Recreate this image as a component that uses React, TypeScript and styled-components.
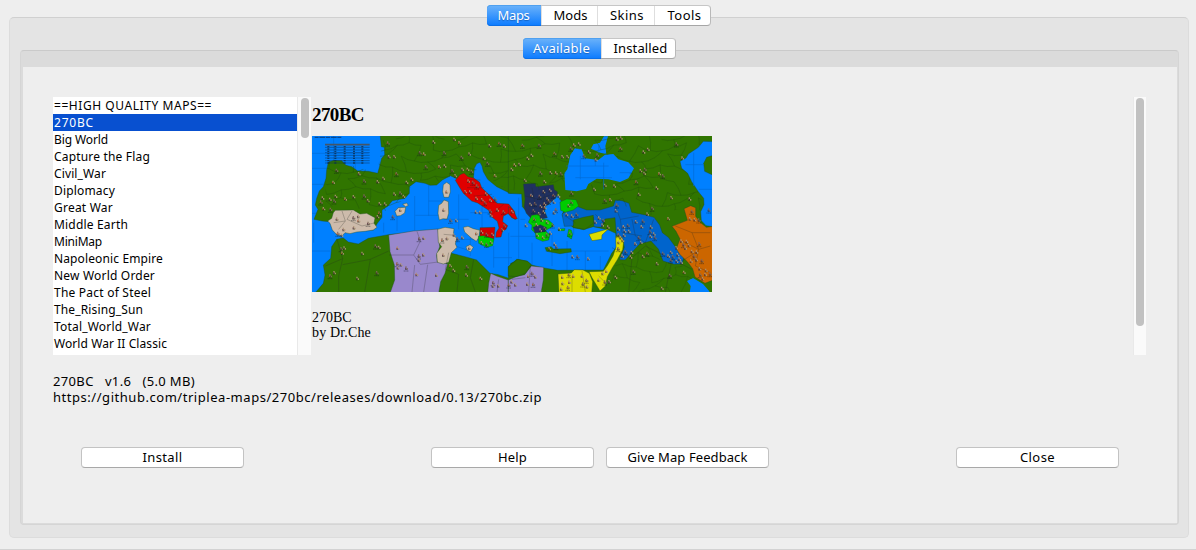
import React, { useLayoutEffect, useRef, useState } from 'react';
import styled, { createGlobalStyle, css } from 'styled-components';

const Global = createGlobalStyle`
  * { box-sizing: border-box; }
  html, body { margin: 0; background: #eeeeee; }
  body { overflow: hidden; }
`;

const Window = styled.main`
  width: 1196px;
  height: 550px;
  padding: 17px 7px 11px 9px;
  background: #eeeeee;
  border-bottom: 1px solid #d2d2d2;
  color: #000;
  font-family: 'Noto Sans', 'Open Sans', sans-serif;
  font-size: 13px;
`;

const OuterPane = styled.section`
  position: relative;
  height: 521px;
  padding: 32px 9px 12px 10px;
  border: 1px solid #dcdcdc;
  border-top-color: #d0d0d0;
  border-radius: 5px;
  background: #e4e4e4;
`;

const InnerPane = styled.section`
  position: relative;
  height: 475px;
  padding: 16px 1px 1px 2px;
  border: 1px solid #d5d5d5;
  border-top-color: #cacaca;
  border-radius: 4px;
  background: #dbdbdb;
`;

const Tabs = styled.nav<{ $left: number; $top: number }>`
  position: absolute;
  left: ${p => p.$left}px;
  top: ${p => p.$top}px;
  display: flex;
  height: 21px;
  border: 1px solid #b9b9b9;
  border-top-color: #c6c6c6;
  border-bottom-color: #a6a6a6;
  border-radius: 4px;
  background: #fff;
`;

const Tab = styled.button<{ $w: number; $active?: boolean; $indent?: number }>`
  width: ${p => p.$w}px;
  height: 19px;
  padding: 0 0 0 ${p => p.$indent ?? 2}px;
  border: 0;
  border-left: 1px solid #dedede;
  background: transparent;
  color: #000;
  font: inherit;
  line-height: 19px;
  text-align: center;
  &:first-child { border-left: 0; }
  ${p => p.$active && css`
    height: 21px;
    margin: -1px 0 -1px -1px;
    padding: 0 1px 0 0;
    border-radius: 4px 0 0 4px;
    background: linear-gradient(#6cb3fa, #0a7aff);
    box-shadow: inset 0 1px #4fa0ef, inset 0 -1px #0b6fe8;
    color: #fff;
    line-height: 21px;
    text-shadow: 0 1px 1px rgba(0, 50, 120, 0.45);
    & + * { border-left: 0; }
  `}
`;

const Content = styled.div`
  height: 456px;
  padding: 30px 31px 0 30px;
  background: #eeeeee;
`;

const Browser = styled.div`
  display: flex;
  height: 258px;
`;

const List = styled.ul`
  width: 244px;
  margin: 0;
  padding: 0;
  list-style: none;
  background: #fff;
  font-size: 12px;
`;

const Item = styled.li<{ $selected?: boolean }>`
  height: 17px;
  padding-left: 1px;
  line-height: 17px;
  background: ${p => (p.$selected ? '#0850d0' : 'transparent')};
  color: ${p => (p.$selected ? '#fff' : '#000')};
`;

const Track = styled.div<{ $w: number }>`
  width: ${p => p.$w}px;
  padding: 1px 2px 0 ${p => p.$w - 11}px;
  border-left: 1px solid #e9e9e9;
  background: #fafafa;
`;

const Thumb = styled.div<{ $h: number }>`
  width: 8px;
  height: ${p => p.$h}px;
  border-radius: 4px;
  background: #c1c1c1;
`;

const Description = styled.article`
  flex: 1;
  padding: 7px 0 0 1px;
  font-family: 'Liberation Serif', serif;
  font-size: 14px;
  line-height: 15px;
  overflow: hidden;
`;

const MapTitle = styled.h1`
  margin: 0 0 10px;
  font-size: 19px;
  line-height: 22px;
`;

const MapImage = styled.svg`
  display: block;
  width: 400px;
  height: 156px;
  margin-bottom: 18px;
`;

const Details = styled.div`
  padding-top: 18px;
  line-height: 16px;
`;

const Line = styled.div`
  height: 16px;
  white-space: pre;
`;

const Actions = styled.div`
  display: flex;
  justify-content: space-between;
  margin-top: 42px;
  padding: 0 27px 0 28px;
`;

const Pair = styled.div`
  display: flex;
  gap: 12px;
`;

const Button = styled.button`
  width: 163px;
  height: 21px;
  padding: 0;
  border: 1px solid #c3c3c3;
  border-bottom-color: #a8a8a8;
  border-radius: 4px;
  background: #fff;
  color: #000;
  font: inherit;
  line-height: 19px;
`;

const Actual = styled.span`
  display: inline-block;
  white-space: pre;
`;

/** Text tracked so that its glyph run fills the given width. */
function Tracked({ text, width }: { text: string; width: number }) {
  const ref = useRef<HTMLSpanElement>(null);
  const [spacing, setSpacing] = useState(0);
  useLayoutEffect(() => {
    const natural = ref.current!.getBoundingClientRect().width;
    setSpacing((width - natural) / text.length);
  }, [text, width]);
  return <Actual ref={ref} style={{ letterSpacing: spacing }}>{text}</Actual>;
}

const maps: [string, number][] = [
  ['==HIGH QUALITY MAPS==', 158], ['270BC', 40], ['Big World', 54], ['Capture the Flag', 96],
  ['Civil_War', 52], ['Diplomacy', 61], ['Great War', 59], ['Middle Earth', 74], ['MiniMap', 48],
  ['Napoleonic Empire', 109], ['New World Order', 101], ['The Pact of Steel', 97],
  ['The_Rising_Sun', 89], ['Total_World_War', 97], ['World War II Classic', 113],
];

const green = '#307500';
const beige = '#cdbbab';
const violet = '#9988cc';
const navy = '#203060';
const royal = '#0064cc';
const lime = '#00cc00';
const yellow = '#dddd00';

const west: [string, string][] = [
  [green, '210,10 214,50 223,52 224,75 215,85 210,105 203,130 175,124 143,123 125,110 108,106 95,92 72,91 55,97 50,120 48,145 40,170 28,183 20,205 16,225 24,238 12,268 36,273 58,275 100,300 190,300 202,280 216,262 216,240 234,228 247,212 285,205 298,190 298,170 318,155 345,160 360,166 380,165 397,150 421,137 440,146 490,145 493,115 500,101 510,97 516,108 520,125 533,148 560,170 600,190 620,188 620,10'],
  [green, '0,490 18,486 40,460 45,435 40,405 62,385 65,350 80,328 100,324 115,336 145,342 175,325 235,314 390,300 425,370 465,380 500,390 540,430 565,434 600,446 602,400 620,393 620,490'],
  [beige, '76,241 130,240 150,252 170,250 195,263 192,280 201,292 190,300 165,304 140,306 120,311 105,308 97,317 82,316 67,300 60,280 53,273 65,265 70,248'],
  [violet, '236,315 310,303 384,297 389,350 380,375 382,395 413,401 405,430 392,455 386,490 240,490 254,450 253,405 240,365'],
  [beige, '383,298 405,292 432,296 430,314 440,325 436,342 441,352 424,368 416,397 400,402 382,397 380,370 395,350 385,337'],
  [violet, '542,430 560,438 595,450 602,443 620,450 620,490 533,490 536,460'],
  [beige, '400,164 410,157 420,164 421,186 416,202 402,202 398,185'],
  [beige, '386,226 395,220 402,210 415,215 416,250 411,267 399,266 388,270 384,250'],
  [beige, '255,244 265,233 287,232 284,249 271,257 260,258'],
  [beige, '278,223 290,219 295,226 287,230'],
  ['#e00000', '436,151 450,134 462,129 474,140 491,144 509,157 515,173 538,195 561,220 596,222 614,245 616,268 605,263 596,250 580,258 578,275 593,287 587,299 578,302 573,321 557,322 559,307 567,294 562,274 543,259 536,241 503,219 485,213 460,190 448,171'],
  [beige, '460,292 474,289 490,296 510,301 506,323 499,334 485,325 464,306'],
  ['#d00000', '510,293 555,292 552,326 510,319'],
  [lime, '505,319 520,317 552,327 548,347 530,352 506,340'],
  [beige, '468,350 480,344 490,352 482,365 471,360'],
];

const east: [string, string][] = [
  [green, '-5,10 610,10 610,35 580,34 565,52 535,72 528,84 510,94 515,115 533,130 545,155 565,185 581,205 582,224 572,245 574,272 588,287 610,290 610,490 -5,490 -5,410 20,388 50,393 65,405 98,413 143,421 235,420 280,420 305,370 320,350 317,310 296,300 250,290 220,299 190,293 176,280 155,255 165,236 152,210 145,205 110,214 90,245 55,250 37,230 35,192 -5,190'],
  ['#0080ff', '195,55 215,58 225,85 265,90 285,74 310,72 325,88 355,97 372,115 355,145 330,156 295,148 260,146 235,162 228,177 200,184 166,180 163,130 172,118 181,75'],
  ['#0080ff', '243,56 250,43 270,38 282,19 294,19 286,48 289,72 271,68'],
  ['#0080ff', '128,198 150,197 145,218 157,242 154,271 130,269 112,257'],
  [navy, '40,162 76,160 78,170 130,164 133,179 143,186 139,202 117,222 105,230 104,244 112,263 90,268 62,264 49,250 42,231 45,207'],
  [royal, '156,252 178,236 198,228 230,240 270,240 310,228 316,210 336,212 357,220 365,247 402,254 432,262 449,285 457,308 475,322 496,350 521,380 517,402 492,403 459,393 445,357 423,333 389,342 366,367 346,390 328,389 343,352 338,324 319,316 315,263 285,267 276,292 252,290 250,262 209,269 188,288 163,289'],
  [green, '190,270 220,262 250,256 250,280 225,298 190,292'],
  [lime, '150,216 170,207 198,209 206,228 190,240 166,247 152,241'],
  [lime, '65,256 88,253 91,267 115,270 130,283 127,290 105,302 120,314 116,330 98,334 78,325 76,309 65,299 66,286 55,277'],
  [navy, '69,292 91,284 110,293 105,305 75,309'],
  [lime, '176,298 184,301 188,314 184,327 172,319'],
  [lime, '144,297 165,296 163,302 145,302'],
  [green, '105,353 123,350 131,357 183,356 184,366 150,371 110,364'],
  [yellow, '237,313 262,306 296,296 276,315 275,328 246,332'],
  [yellow, '317,320 332,319 341,334 338,359 322,389 307,413 292,440 286,468 270,483 246,443 237,425 280,424 292,407 309,378 318,351'],
  [yellow, '144,432 184,429 193,419 219,420 238,430 248,455 245,490 147,490'],
  [violet, '-5,450 18,440 44,434 64,408 101,412 100,450 93,490 -5,490'],
  [green, '-5,410 23,388 53,394 64,404 46,430 18,440 -5,438'],
  ['#cc6600', '486,289 532,271 522,236 542,227 557,233 557,259 572,278 589,292 610,289 610,450 585,460 555,441 548,416 532,395 509,373 499,356 510,327 498,304'],
  ['#0080ff', '531,453 549,444 579,462 598,484 598,490 539,490 542,468'],
  [green, '610,76 590,82 581,100 584,124 610,136'],
  ['#e00000', '-5,230 7,237 22,266 15,268 -5,252'],
];

const westUnits = '234,39 237,80 253,80 330,68 342,72 371,36 403,68 433,28 448,38 455,82 478,72 539,47 568,40 583,48 522,85 533,100 555,137 605,118 80,121 147,131 70,157 163,153 203,155 220,145 260,131 290,157 305,148 348,110 388,110 404,108 427,122 457,118 473,118 485,124 436,137 38,204 33,216 60,208 77,199 73,213 106,207 131,200 163,198 174,212 41,236 62,238 209,221 225,222 208,249 203,260 253,192 271,189 281,199 81,267 131,263 145,259 146,272 175,280 132,293 101,298 84,310 95,316 271,240 249,260 410,185 401,240 422,271 439,271 475,153 489,157 466,185 480,186 501,168 499,205 516,209 525,218 541,211 528,192 556,207 498,246 510,247 541,243 543,256 562,240 581,245 606,245 577,299 583,287 499,310 515,306 530,313 547,313 515,338 530,343 543,337 478,354 397,330 411,325 432,315 443,326 457,322 400,375 328,326 341,324 263,354 327,378 340,374 327,390 262,401 273,404 264,413 289,414 320,433 379,435 94,356 103,354 97,369 197,348 207,352 157,370 61,437 73,428 142,445 201,428 421,407 431,421 471,410 469,435 512,445 550,458 549,468 565,467 597,465 605,455';
const eastUnits = '38,46 53,85 65,76 88,46 14,105 28,103 92,129 122,128 138,129 153,131 45,151 104,155 134,70 157,80 172,80 183,55 192,45 207,42 222,77 237,66 258,89 262,75 321,27 333,24 332,55 401,66 414,58 500,42 517,84 392,122 405,118 403,130 448,131 459,137 440,174 387,193 379,155 313,168 285,166 285,211 301,209 253,178 185,189 146,198 64,196 89,199 120,181 101,185 131,196 112,207 132,216 117,214 104,222 61,223 75,221 92,229 105,233 71,242 87,251 101,246 138,239 132,248 176,227 184,216 170,253 186,258 200,253 256,276 267,264 280,271 277,285 294,291 321,225 318,242 378,275 399,273 395,290 412,252 427,235 325,297 341,290 354,286 344,303 357,304 326,314 342,316 332,323 387,323 376,341 393,337 421,305 432,312 422,319 435,323 423,291 399,379 412,370 365,367 362,381 347,365 337,378 483,367 459,370 499,353 475,378 489,380 503,374 508,387 483,390 500,394 514,397 546,244 540,266 554,269 567,270 514,333 530,334 521,344 537,346 526,354 568,341 546,364 560,366 552,378 543,393 559,389 576,392 569,416 588,421 571,434 586,433 578,446 600,431 484,203 539,207 597,240 475,266 441,401 480,436 456,475 522,427 371,424 317,442 298,455 73,267 95,270 111,277 128,285 80,284 91,300 104,295 82,315 99,322 111,314 121,309 148,297 180,310 48,286 188,380 203,380 235,386 134,342 139,350 118,356 55,438 66,430 76,440 52,462 70,463 16,464 157,441 177,434 190,438 216,438 230,451 158,460 178,456 219,462 231,470 154,477 174,472 266,450 278,430 285,456 289,423 326,337 325,356 338,331';

const parse = (s: string) => s.split(' ').map(p => p.split(',').map(Number));

function Units({ points }: { points: string }) {
  return (
    <>
      {parse(points).map(([x, y], i) => (
        <g key={i} transform={`translate(${x} ${y})`} opacity=".85">
          <path d="M-4 1h7v5h-7z" fill="#20251c" opacity=".6" />
          <path d="M-3-5h4v5h-4zM1 0h4v5h-4z" fill={i % 3 ? '#b09775' : '#806a5c'} />
          <path d="M-4-1h3v4h-3z" fill={i % 4 ? '#64394a' : '#b05030'} />
          {i % 3 === 0 && <path d="M-8 9h15" stroke="#101820" strokeWidth="2.4" strokeDasharray="4 1" opacity=".6" />}
        </g>
      ))}
    </>
  );
}

/** Irregular province mesh: jittered cells over the whole board. */
function provinces() {
  const at = (c: number, r: number): [number, number] => [
    c * 40 + (r % 2) * 14 + Math.sin(c * 12.9 + r * 7.3) * 13,
    r * 33 + Math.cos(c * 5.1 + r * 17.7) * 13,
  ];
  let d = '';
  for (let r = 0; r < 15; r++) {
    for (let c = -1; c < 31; c++) {
      const [x, y] = at(c, r);
      const [ax, ay] = at(c + 1, r);
      const [bx, by] = at(c, r + 1);
      if ((c * 3 + r) % 5) d += `M${x} ${y}Q${(x + ax) / 2} ${(y + ay) / 2 + 6} ${ax} ${ay}`;
      if ((c + r) % 2) d += `M${x} ${y}Q${(x + bx) / 2 + 5} ${(y + by) / 2} ${bx} ${by}`;
    }
  }
  return d;
}

const coastline = { stroke: '#1f4c20', strokeWidth: 1.2, strokeLinejoin: 'round' as const };

function Land({ shapes }: { shapes: [string, string][] }) {
  return <>{shapes.map(([fill, points], i) => <polygon key={i} points={points} fill={fill} {...(fill === '#0080ff' ? {} : coastline)} />)}</>;
}

function Mediterranean() {
  return (
    <MapImage viewBox="0 0 1200 468" preserveAspectRatio="none">
      <defs>
        <clipPath id="north"><path d="M215 0H1200V15L1170 17 1158 36 1125 58 1104 78 1110 98 1135 130 1160 170 1174 205 1166 225 1150 210 1000 240 900 190 820 170 850 130 890 130 930 138 965 100 945 78 900 54 870 60 785 36 760 110 755 150 630 170 550 145 513 82 500 82 485 125 420 120 390 135 300 138 285 185 220 225 40 210 40 130 50 75 95 80 195 112z" /></clipPath>
        <clipPath id="southeast"><path d="M910 390 940 350 980 325 1020 320 1045 375 1110 388 1150 425 1130 435V468H890z" /></clipPath>
      </defs>
      <rect width="1200" height="468" fill="#0080ff" />
      <path d="M0 52H170M65 0V80M0 97H65M0 145H35M130 105V70M0 232H20M5 260V320M0 345H55M215 260V290M255 240V285M308 180V283M350 145V240M310 238H380M350 195H395M395 250H470M440 175V280M475 290V360M510 195V330M545 330V395M430 330 475 345M435 310H500M545 365H600M590 290V410M475 230H540M620 185V380M660 320V405M595 301H700M720 290V390M700 345H890M765 315V405M785 265V295M820 345V405M865 360V400M625 250H640" fill="none" stroke="#006bd7" strokeWidth="2" />
      <g transform="translate(-6 -18)"><Land shapes={west} /></g>
      <g transform="translate(594 -18)"><Land shapes={east} /></g>
      <path clipPath="url(#north)" d={provinces()} fill="none" stroke="#204f0c" strokeWidth="1.5" opacity=".7" />
      <path clipPath="url(#southeast)" d={provinces()} fill="none" stroke="#204f0c" strokeWidth="1.5" opacity=".6" />
      <g fill="none" stroke="#252b22" strokeWidth="1.5" opacity=".5">
        <path d="M75 310 92 368 80 420V468M92 386 175 370 230 345M92 368 40 390M175 370 158 468M231 357H305L325 315 315 286M305 357 325 385 378 378M308 387 300 468M347 386 335 468M395 295 430 298M410 350 400 400 440 415 435 468M485 370 475 425 490 468M560 430 555 468" />
        <path d="M90 225 100 255 80 280M120 225 105 250 150 270 190 260M65 260 100 255M462 130 505 132M465 155 515 155M485 180 540 175M520 205 545 180M545 230 575 205" />
        <path d="M640 180 680 190 720 175M660 155 670 210M700 155 690 230M760 240 790 260M850 235 875 260M910 210 925 250 980 240M925 250 930 290 990 300M960 250 970 300 1000 320M1025 250 1000 320M900 335 960 365 1000 330M960 365 950 468M1000 330 1080 370 1060 468M1080 370 1140 400M600 430 640 425M655 390 650 468M780 420V468M810 405 820 468M860 420 880 440" />
        <path d="M1090 270 1140 290 1195 290M1110 315 1160 340 1195 330M1140 290 1160 340 1150 390 1195 410M1110 375 1150 350" />
      </g>
      <path d="M763 90H890M805 60V130M875 80V160M790 125H900M850 68V90M923 110H960M1120 86H1175M1145 50V150M1160 160H1200M860 25V50" fill="none" stroke="#006bd7" strokeWidth="2" />
      <g transform="translate(-6 -18)"><Units points={westUnits} /></g>
      <g transform="translate(594 -18)"><Units points={eastUnits} /></g>
      <g stroke="#0a2d51" fill="none">
        <path d="M8 4H90" stroke="#073a78" strokeWidth="4" strokeDasharray="12 2 18 2" opacity=".8" />
        <path d="M39 26H173" stroke="#455566" strokeWidth="5" />
        <path d="M39 34H173M39 42H173M39 50H173M39 58H173M39 66H173M39 74H173M39 81H173" strokeWidth="1.4" />
        <path d="M49 30V83M70 30V83M98 30V83M126 30V83M151 30V83" strokeWidth="6" strokeDasharray="4 3" opacity=".8" />
      </g>
    </MapImage>
  );
}

export default function App() {
  return (
    <Window>
      <Global />
      <OuterPane>
        <Tabs $left={477} $top={-13}>
          <Tab $active $w={54}><Tracked text="Maps" width={32} /></Tab>
          <Tab $w={56}><Tracked text="Mods" width={34} /></Tab>
          <Tab $w={57}><Tracked text="Skins" width={34} /></Tab>
          <Tab $w={56} $indent={4}><Tracked text="Tools" width={34} /></Tab>
        </Tabs>
        <InnerPane>
          <Tabs $left={502} $top={-13}>
            <Tab $active $w={78}><Tracked text="Available" width={57} /></Tab>
            <Tab $w={74} $indent={4}><Tracked text="Installed" width={54} /></Tab>
          </Tabs>
          <Content>
            <Browser>
              <List>
                {maps.map(([name, width]) => (
                  <Item key={name} $selected={name === '270BC'}><Tracked text={name} width={width} /></Item>
                ))}
              </List>
              <Track $w={14}><Thumb $h={40} /></Track>
              <Description>
                <MapTitle><Tracked text="270BC" width={52} /></MapTitle>
                <Mediterranean />
                <div>270BC</div>
                <div><Tracked text="by Dr.Che" width={59} /></div>
              </Description>
              <Track $w={13}><Thumb $h={228} /></Track>
            </Browser>
            <Details>
              <Line><Tracked text="270BC   v1.6   (5.0 MB)" width={142} /></Line>
              <Line><Tracked text="https://github.com/triplea-maps/270bc/releases/download/0.13/270bc.zip" width={489} /></Line>
            </Details>
            <Actions>
              <Button><Tracked text="Install" width={40} /></Button>
              <Pair>
                <Button><Tracked text="Help" width={29} /></Button>
                <Button><Tracked text="Give Map Feedback" width={120} /></Button>
              </Pair>
              <Button><Tracked text="Close" width={35} /></Button>
            </Actions>
          </Content>
        </InnerPane>
      </OuterPane>
    </Window>
  );
}
